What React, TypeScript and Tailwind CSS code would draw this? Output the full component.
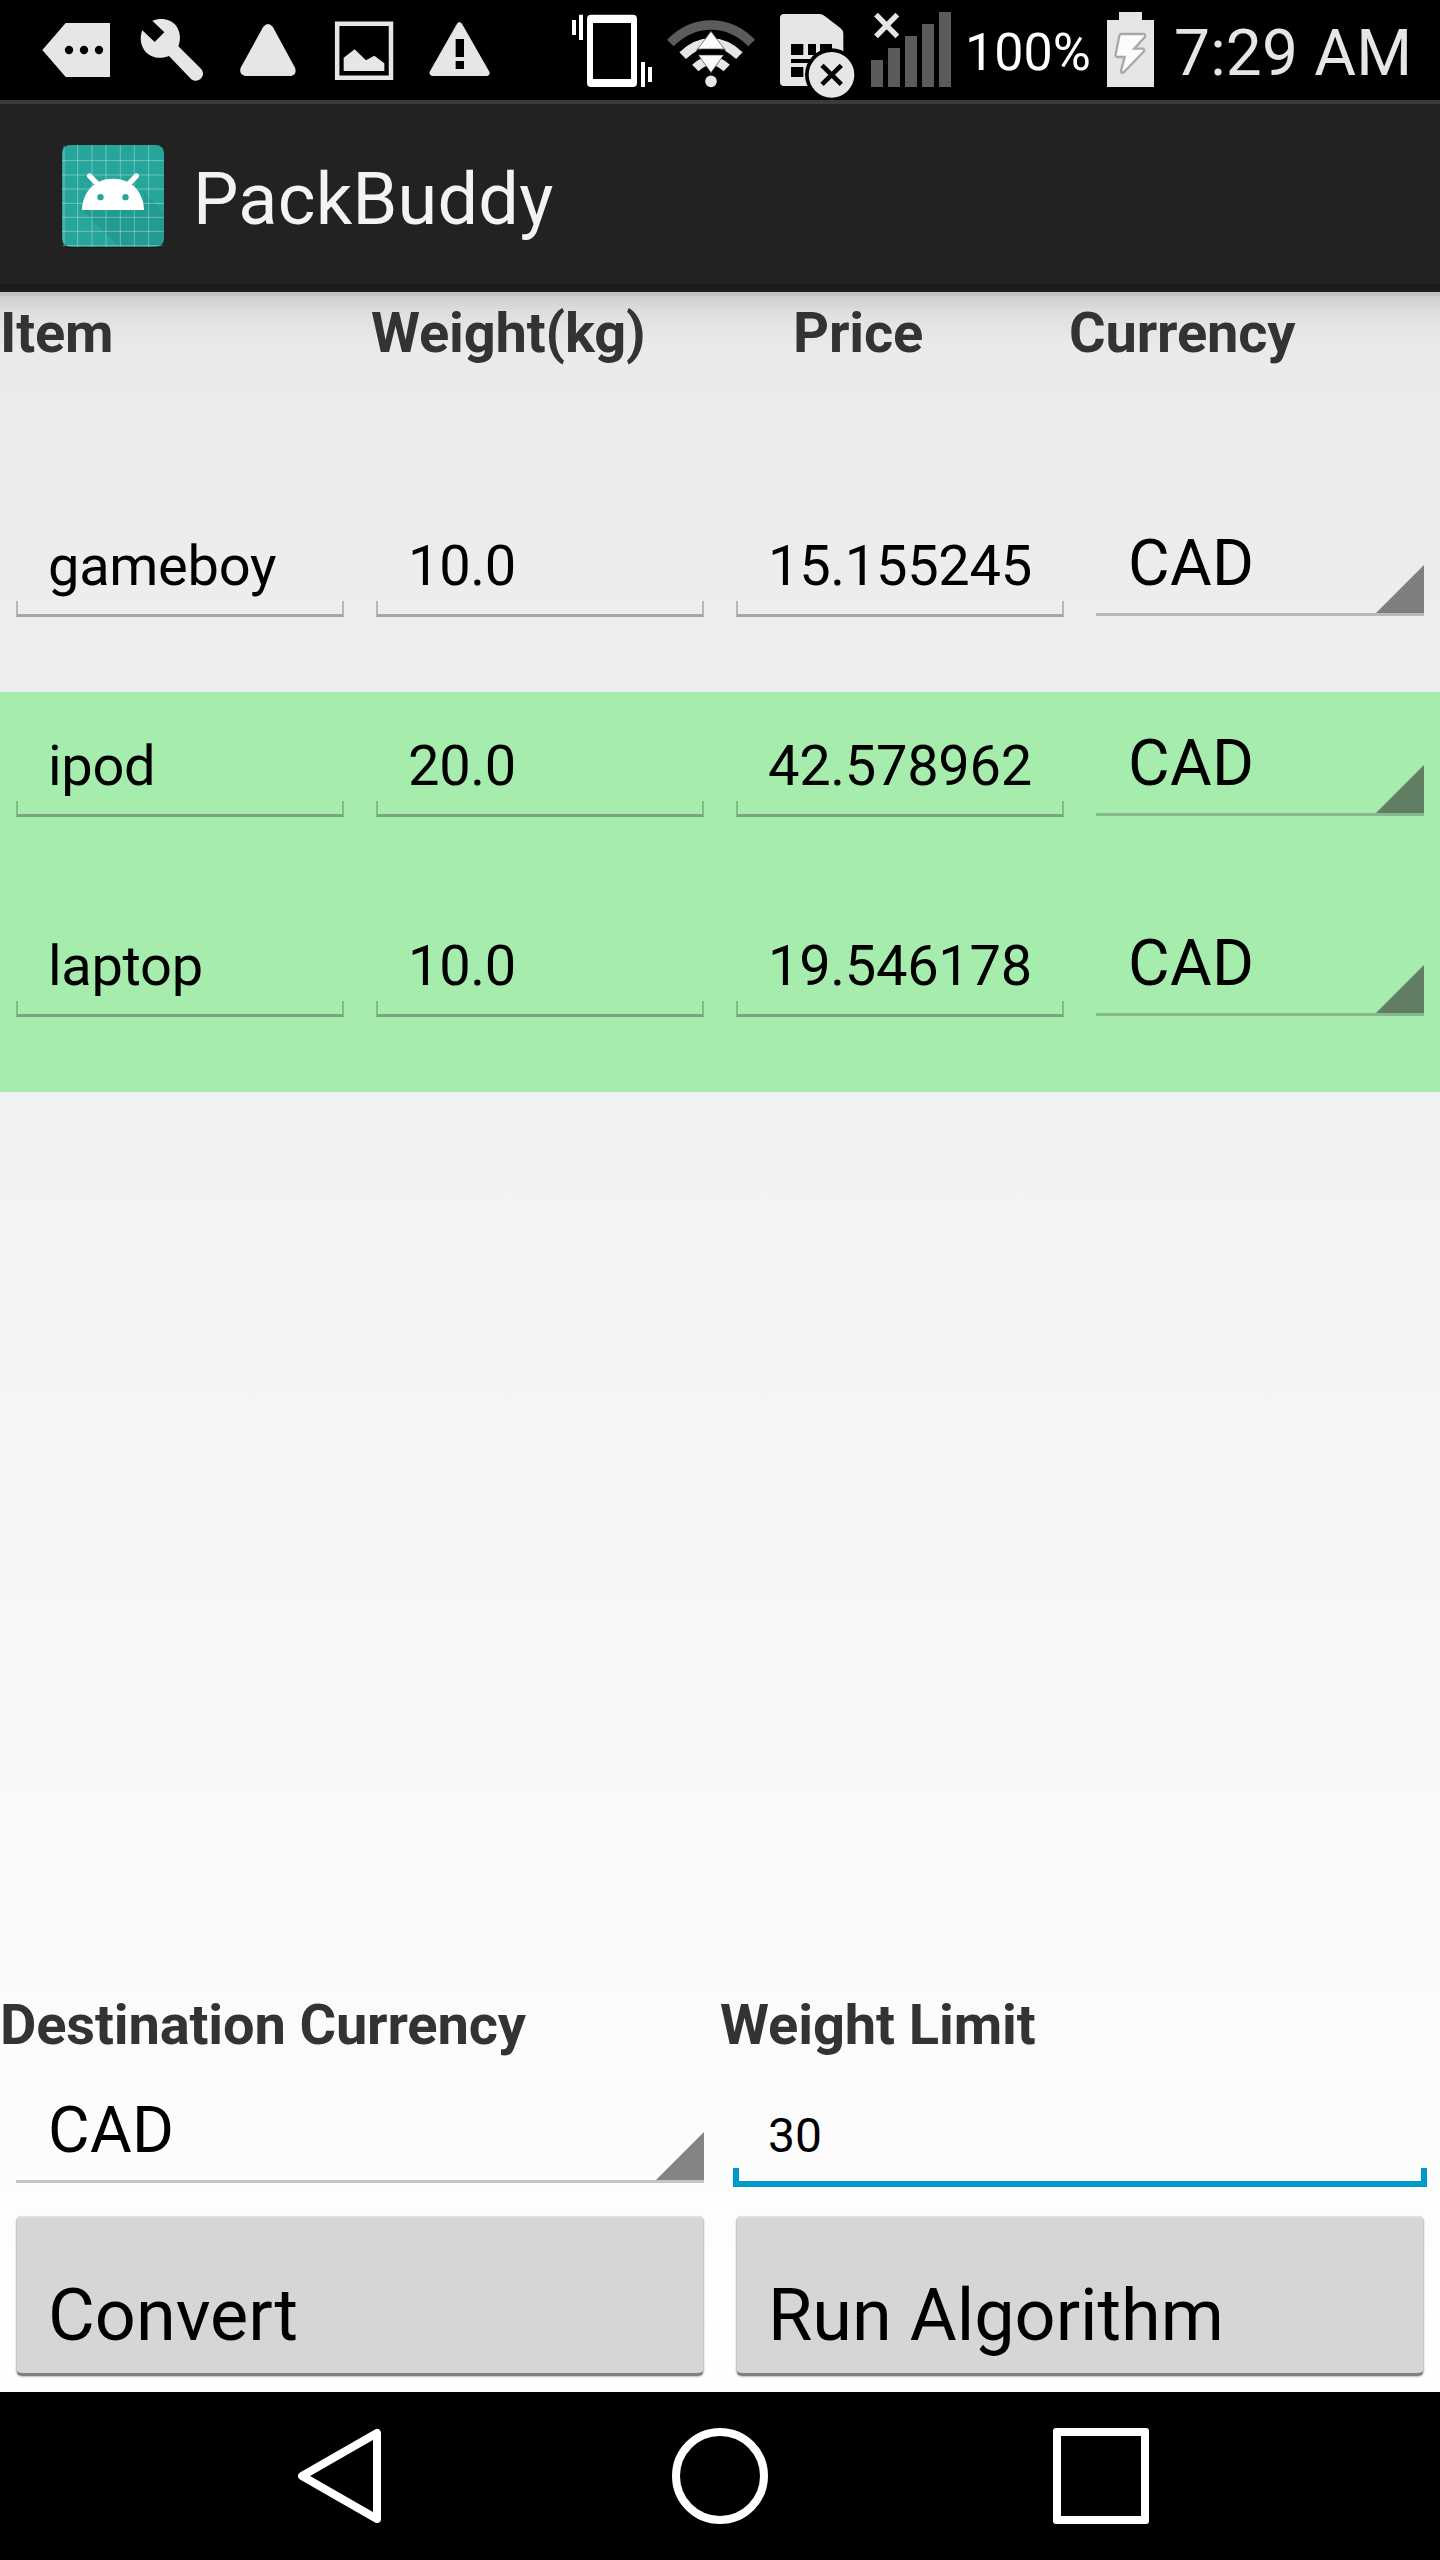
import type { ReactNode } from "react";

type GlyphProps = { viewBox: string; className: string; children: ReactNode };

function Glyph({ viewBox, className, children }: GlyphProps) {
  return (
    <svg viewBox={viewBox} className={`h-[100px] shrink-0 ${className}`} aria-hidden="true">
      {children}
    </svg>
  );
}

function StatusBar() {
  return (
    <div className="flex h-[100px] bg-black text-[#e6e6e6]">
      <Glyph viewBox="126 0 204 300" className="ml-[42px] w-[68px]">
        <path d="M127 150 197 69H330V231H197Z" fill="#e6e6e6" />
        <circle cx="207" cy="150" r="12.5" />
        <circle cx="252" cy="150" r="12.5" />
        <circle cx="297" cy="150" r="12.5" />
      </Glyph>
      <Glyph viewBox="420 0 192 300" className="ml-[30px] w-[64px]">
        <path
          d="M457 62C482 52 513 56 529 78C541 95 543 118 535 139L603 206C611 215 611 226 604 234C596 244 582 245 573 237L507 168C481 179 450 173 434 152C421 135 419 111 427 91L464 126L493 97Z"
          fill="#e6e6e6"
        />
      </Glyph>
      <Glyph viewBox="720 0 168 300" className="ml-[36px] w-[56px]">
        <path d="M789 82Q804 62 819 82L885 203Q892 223 873 228H735Q716 223 722 203Z" fill="#e6e6e6" />
      </Glyph>
      <Glyph viewBox="1002 0 180 300" className="ml-[38px] w-[60px]">
        <path d="M1011.5 71H1173V233H1011.5Z" fill="none" stroke="#e6e6e6" strokeWidth="13.5" />
        <path d="M1031 173 1064 148 1098 181 1123 167 1153 190V213H1031Z" fill="#e6e6e6" />
      </Glyph>
      <Glyph viewBox="1284 0 186 300" className="ml-[34px] w-[62px]">
        <path d="M1371 71Q1378 61 1386 71L1468 215Q1471 225 1462 228H1296Q1286 225 1289 215Z" fill="#e6e6e6" />
        <path d="M1367 117H1392V171H1367ZM1367 183H1392V207H1367Z" />
      </Glyph>

      <Glyph viewBox="66 0 240 300" className="ml-[82px] w-[80px]">
        <path
          fillRule="evenodd"
          d="M123 44H249Q261 44 261 56V249Q261 261 249 261H123Q111 261 111 249V56Q111 44 123 44ZM129 69V237H243V69Z"
          fill="#fff"
        />
        <path d="M66 60H78V105H66ZM87 44H99V120H87ZM273 186H285V261H273ZM294 201H306V246H294Z" fill="#fff" />
      </Glyph>
      <Glyph viewBox="348 0 270 300" className="ml-[14px] w-[90px]">
        <path d="M361 129Q414 75 483 75Q552 75 605 129" fill="none" stroke="#5b5b5b" strokeWidth="28" />
        <path d="M398 167Q437 129 483 129Q529 129 568 167" fill="none" stroke="#e6e6e6" strokeWidth="28" />
        <path d="M436 204Q458 182 483 182Q508 182 530 204" fill="none" stroke="#e6e6e6" strokeWidth="27" />
        <path d="M440 148H526V165H440Z" />
        <circle cx="483" cy="244" r="17.5" fill="#e6e6e6" />
        <path d="M483 94 523 147H443ZM483 218 445 165H521Z" fill="#fcfcfc" stroke="#3b3b3b" strokeWidth="2" />
      </Glyph>
      <Glyph viewBox="684 0 234 300" className="ml-[22px] w-[78px]">
        <path d="M702 42H808Q817 42 824 48L871 84Q880 91 880 101V258H702Q690 258 690 246V54Q690 42 702 42Z" fill="#e6e6e6" />
        <path d="M723 132H760V165H723ZM774 132H798V165H774ZM810 132H846V165H810ZM723 177H790V189H723ZM723 201H760V231H723Z" />
        <circle cx="844" cy="224" r="79" />
        <circle cx="844.5" cy="224.5" r="68.5" fill="#e6e6e6" />
        <path d="M816 196 874 253M874 196 816 253" stroke="#000" strokeWidth="14" />
      </Glyph>
      <Glyph viewBox="960 0 246 300" className="ml-[14px] w-[82px]">
        <path d="M963 180H999V261H963ZM1014 144H1050V261H1014ZM1065 108H1101V261H1065ZM1116 72H1152V261H1116ZM1167 36H1203V261H1167Z" fill="#5b5b5b" />
        <path d="M978 44 1042 109M1042 44 978 109" stroke="#e6e6e6" strokeWidth="16" />
      </Glyph>
      <span className="ml-[13px] w-[126px] shrink-0 pt-[23px] text-[52px] leading-[60px] text-white">100%</span>
      <Glyph viewBox="501 0 144 300" className="ml-[16px] w-[48px]">
        <path d="M501 60H537V36H606V60H642V261H501Z" fill="#e6e6e6" />
        <path
          d="M543 102H612Q618 105 614 112L583 146H609Q616 149 610 156L552 216Q543 222 543 212L554 171H532Q525 170 527 163L538 107Q539 102 543 102Z"
          fill="#fcfcfc"
          stroke="#a8a8a8"
          strokeWidth="7"
        />
      </Glyph>
      <span className="ml-[19px] shrink-0 whitespace-nowrap pt-[16px] text-[64px] leading-[76px] tracking-[0.2px]">7:29 AM</span>
    </div>
  );
}

function LauncherIcon() {
  return (
    <svg viewBox="30 24 318 321" className="h-[107px] w-[106px] shrink-0" aria-hidden="true">
      <rect x="36" y="33" width="306" height="306" rx="24" fill="#161616" />
      <rect x="36" y="30" width="306" height="305" rx="24" fill="#26a69a" />
      <path d="M96 225H282V170L342 232V311Q342 335 318 335H208Z" fill="#1f8f85" opacity=".4" />
      <path
        d="M42 31V334M83 30V335M126 30V335M168 30V335M211 30V335M253 30V335M296 30V335M36 77H342M36 120H342M36 162H342M36 205H342M36 247H342M36 289H342M40 332H338"
        stroke="#fff"
        strokeOpacity=".32"
        strokeWidth="3"
      />
      <path d="M119 123 144 149M259 123 234 149" stroke="#fff" strokeWidth="16" strokeLinecap="round" />
      <path d="M96 225C97 170 135 131 189 131C243 131 281 170 282 225Z" fill="#fff" />
      <circle cx="151.5" cy="186.5" r="9.5" fill="#26a69a" />
      <circle cx="226.5" cy="186.5" r="9.5" fill="#26a69a" />
    </svg>
  );
}

function TextField({ value }: { value: string }) {
  return (
    <div className="mx-4 flex h-[125px] flex-col justify-between pt-[41px]">
      <span className="pl-8 text-[56px] leading-[66px] tracking-[-0.3px]">{value}</span>
      <div className="h-4 shrink-0 border-x-2 border-b-[3px] border-x-[#343434]/28 border-b-[#343434]/38" />
    </div>
  );
}

function Spinner({ value }: { value: string }) {
  return (
    <div className="mx-4 flex h-[124px] items-end justify-between border-b-[3px] border-[#343434]/28">
      <span className="h-[87px] pl-8 text-[64px] leading-[75px] tracking-[0.3px]">{value}</span>
      <svg viewBox="0 0 48 48" className="h-12 w-12 shrink-0" aria-hidden="true">
        <path d="M0 48 48 0V48Z" fill="#343434" fillOpacity=".6" />
      </svg>
    </div>
  );
}

function HoloButton({ label }: { label: string }) {
  return (
    <button className="mx-4 mt-6 flex h-[160px] rounded-[6px] border-x border-b-[3px] border-x-[#c4c4c4] border-b-[#808080] bg-[#d6d6d6] pl-[31px] pt-[58px] text-left text-[72px] leading-[84px] shadow-[0_1px_2px_rgba(0,0,0,0.25),inset_0_2px_1px_#dfdfdf]">
      {label}
    </button>
  );
}

const items = [
  { name: "gameboy", weight: "10.0", price: "15.155245", currency: "CAD", picked: false },
  { name: "ipod", weight: "20.0", price: "42.578962", currency: "CAD", picked: true },
  { name: "laptop", weight: "10.0", price: "19.546178", currency: "CAD", picked: true },
];

export default function App() {
  return (
    <div className="flex h-[2560px] w-[1440px] flex-col overflow-hidden bg-black font-['Roboto',sans-serif] text-black">
      <StatusBar />
      <header className="flex h-[192px] items-start border-b-8 border-t-4 border-b-[#1b1b1b] border-t-[#3a3a3a] bg-[#222222] pl-[60px] pt-[39px]">
        <LauncherIcon />
        <h1 className="ml-[27px] mt-[15px] text-[72px] leading-[84px] tracking-[0.25px] text-[#f3f3f3]">PackBuddy</h1>
      </header>

      <main className="flex h-[2100px] flex-col bg-linear-to-b from-[#eaeaea] to-white">
        <div className="flex h-[200px] border-t-4 border-black/17 bg-[linear-gradient(to_bottom,rgba(0,0,0,0.12),rgba(0,0,0,0.05)_16px,rgba(0,0,0,0.02)_34px,transparent_52px)] bg-no-repeat pt-1 text-[56px] font-bold leading-[66px] tracking-[-0.15px] text-[#333333]">
          <span className="w-[371px]">Item</span>
          <span className="w-[422px]">Weight(kg)</span>
          <span className="w-[276px]">Price</span>
          <span>Currency</span>
        </div>

        {items.map((item) => (
          <div key={item.name} className={`grid h-[200px] grid-cols-4 ${item.picked ? "bg-[#a5ecad]" : ""}`}>
            <TextField value={item.name} />
            <TextField value={item.weight} />
            <TextField value={item.price} />
            <Spinner value={item.currency} />
          </div>
        ))}

        <section className="mt-auto grid h-[400px] grid-cols-2 grid-rows-[67px_133px_200px]">
          <span className="text-[56px] font-bold leading-[66px] tracking-[-0.15px] text-[#333333]">Destination Currency</span>
          <span className="text-[56px] font-bold leading-[66px] tracking-[-0.1px] text-[#333333]">Weight Limit</span>
          <Spinner value="CAD" />
          <div className="mx-[13px] flex h-[128px] flex-col justify-between pt-[49px]">
            <span className="pl-[35px] text-[48px] leading-[56px]">30</span>
            <div className="h-[19px] border-x-[6px] border-b-[6px] border-[#0099cc]" />
          </div>
          <HoloButton label="Convert" />
          <HoloButton label="Run Algorithm" />
        </section>
      </main>

      <nav className="flex h-[168px] items-center bg-black pl-[297px]">
        <svg viewBox="0 0 84 96" className="h-24 w-[84px]" fill="none" stroke="#fff" strokeWidth="8" strokeLinejoin="round" aria-hidden="true">
          <path d="M5 48 80 5V91Z" />
        </svg>
        <div className="ml-[291px] h-24 w-24 rounded-full border-8 border-white" />
        <div className="ml-[285px] h-24 w-24 rounded-[3px] border-8 border-white" />
      </nav>
    </div>
  );
}
